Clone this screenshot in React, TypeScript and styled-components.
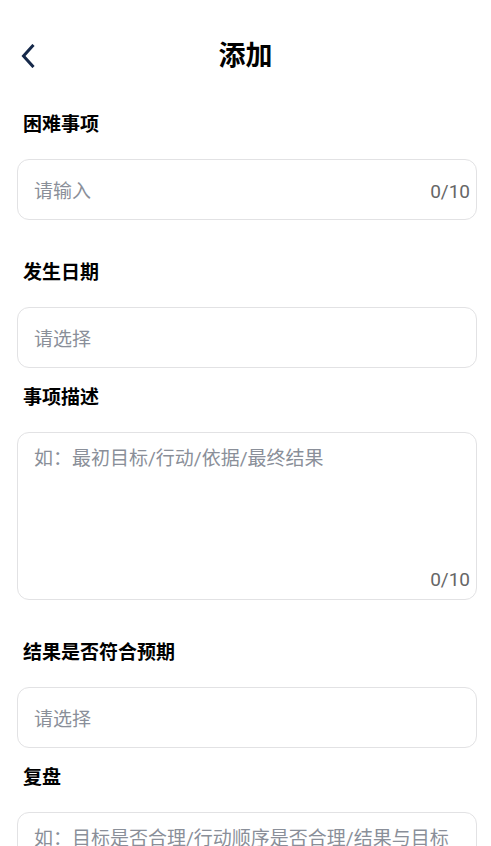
import React from 'react';
import styled, { createGlobalStyle } from 'styled-components';

const GlobalStyle = createGlobalStyle`
  body {
    margin: 0;
    background: #ffffff;
    font-family: Roboto, "Noto Sans CJK SC", sans-serif;
  }
`;

const Page = styled.div`
  display: flex;
  flex-direction: column;
  background: #ffffff;
`;

const Header = styled.div`
  display: flex;
  align-items: center;
  height: 110px;
`;

const HeaderInner = styled.div`
  position: relative;
  width: 100%;
  height: 56px;
  margin-top: 1px;
  display: flex;
  align-items: center;
  justify-content: center;
`;

const BackButton = styled.button`
  position: absolute;
  left: 16px;
  top: 50%;
  transform: translateY(-50%);
  width: 24px;
  height: 30px;
  padding: 0;
  border: none;
  background: none;
  display: flex;
  align-items: center;
  justify-content: center;
`;

const Title = styled.h1`
  margin: 0;
  font-size: 27px;
  font-weight: 700;
  color: #000000;
  line-height: 36px;
`;

const Form = styled.div`
  display: flex;
  flex-direction: column;
  padding: 0 14px 0 17px;
`;

const Field = styled.div<{ $after: number }>`
  display: flex;
  flex-direction: column;
  margin-bottom: ${(p) => p.$after}px;
`;

const Label = styled.div`
  font-size: 19px;
  font-weight: 700;
  line-height: 26px;
  color: #000000;
  padding: 2px 0 0 6px;
  margin-bottom: 21px;
`;

const Box = styled.div<{ $tall?: boolean }>`
  box-sizing: border-box;
  width: 460px;
  height: ${(p) => (p.$tall ? '168px' : '61px')};
  border: 1px solid #e2e2e4;
  border-radius: 12px;
  display: flex;
  flex-direction: ${(p) => (p.$tall ? 'column' : 'row')};
  align-items: ${(p) => (p.$tall ? 'stretch' : 'center')};
  justify-content: space-between;
  padding: ${(p) => (p.$tall ? '13px 6px 6px 16px' : '4px 6px 0 16px')};
`;

const Placeholder = styled.span`
  font-size: 19px;
  line-height: 26px;
  color: #8a8f99;
  white-space: nowrap;
  overflow: hidden;
`;

const Counter = styled.span<{ $tall?: boolean }>`
  font-size: 19px;
  line-height: 26px;
  color: #666666;
  align-self: ${(p) => (p.$tall ? 'flex-end' : 'center')};
`;

const ChevronLeft = () => (
  <svg width="14" height="24" viewBox="0 0 14 24" fill="none">
    <path
      d="M11.5 2 L2.5 12 L11.5 22"
      stroke="#16294a"
      strokeWidth="3"
      strokeLinecap="square"
      strokeLinejoin="miter"
    />
  </svg>
);

type FieldItem = {
  label: string;
  placeholder: string;
  tall?: boolean;
  counter?: boolean;
  after: number;
};

const fields: FieldItem[] = [
  { label: '困难事项', placeholder: '请输入', counter: true, after: 38 },
  { label: '发生日期', placeholder: '请选择', after: 15 },
  { label: '事项描述', placeholder: '如：最初目标/行动/依据/最终结果', tall: true, counter: true, after: 38 },
  { label: '结果是否符合预期', placeholder: '请选择', after: 15 },
  { label: '复盘', placeholder: '如：目标是否合理/行动顺序是否合理/结果与目标', tall: true, counter: true, after: 20 },
];

const App = () => {
  return (
    <Page>
      <GlobalStyle />
      <Header>
        <HeaderInner>
          <BackButton>
            <ChevronLeft />
          </BackButton>
          <Title>添加</Title>
        </HeaderInner>
      </Header>
      <Form>
        {fields.map((f) => (
          <Field key={f.label} $after={f.after}>
            <Label>{f.label}</Label>
            <Box $tall={f.tall}>
              <Placeholder>{f.placeholder}</Placeholder>
              {f.counter && <Counter $tall={f.tall}>0/10</Counter>}
            </Box>
          </Field>
        ))}
      </Form>
    </Page>
  );
};

export default App;
